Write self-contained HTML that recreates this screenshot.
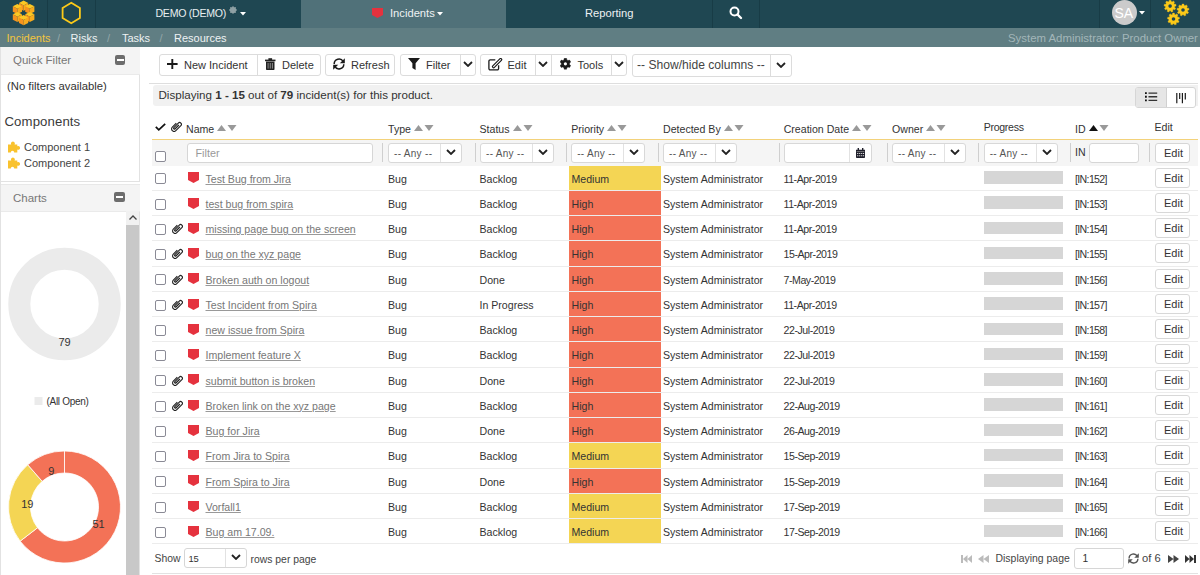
<!DOCTYPE html><html><head><meta charset="utf-8"><style>
*{box-sizing:border-box;margin:0;padding:0}
svg{display:block}
html,body{width:1200px;height:575px;overflow:hidden;background:#fff;font-family:"Liberation Sans",sans-serif;color:#333;font-size:11px}
.a{position:absolute}
.nw{white-space:nowrap}
#top{left:0;top:0;width:1200px;height:28px;background:#1f4752}
.vd{position:absolute;top:0;width:1px;height:28px;background:#183c46}
#nav{left:0;top:28px;width:1200px;height:19px;background:#607e83}
.navt{position:absolute;top:31px;font-size:11px;color:#eef2f3;line-height:14px}
.sl{color:#93a6a9}
#lp{left:0;top:47px;width:140px;height:528px;border-left:1px solid #e2e2e2;border-right:1px solid #e2e2e2}
.ph{position:absolute;left:0;width:139px;height:28px;background:#f4f4f4;border-bottom:1px solid #eaeaea}
.pht{position:absolute;left:12px;top:6px;font-size:11.5px;color:#777;line-height:14px}
.mini{position:absolute;left:113.5px;width:10.5px;height:10px;background:#6d6d6d;border-radius:2px}
.mini:after{content:"";position:absolute;left:2px;top:4px;width:7px;height:2px;background:#fff}
.btn{position:absolute;top:54px;height:22px;border:1px solid #dcdcdc;border-radius:3px;background:#fff}
.bt{position:absolute;top:4px;font-size:11px;line-height:13px;color:#333;white-space:nowrap}
.bd{position:absolute;top:0;width:1px;height:20px;background:#dcdcdc}
.hd{position:absolute;top:123px;font-size:10.6px;line-height:13px;color:#333;white-space:nowrap}
.sort{display:inline-block;margin-left:3px;vertical-align:2.5px}
.dd{position:absolute;top:142.5px;width:74px;height:20.5px;border:1px solid #d8d8d8;border-radius:3px;background:#fff}
.ddt{position:absolute;left:5px;top:4px;font-size:10px;color:#555;line-height:12px;white-space:nowrap;letter-spacing:0.3px}
.ddd{position:absolute;left:51px;top:0;width:1px;height:18.5px;background:#e2e2e2}
.ddc{position:absolute;left:57px;top:5px}
.fd{position:absolute;top:143px;width:1px;height:19px;background:#cfcfcf}
.row{position:absolute;left:152px;width:1046px;height:25.2px;border-bottom:1px solid #ececec}
.c{position:absolute;top:7px;font-size:10.6px;line-height:13px;white-space:nowrap;color:#333}
.cb{position:absolute;left:3px;top:7px;width:11px;height:11px;border:1.5px solid #8a8a95;border-radius:2px;background:#fff}
.lnk{color:#777;text-decoration:underline;text-decoration-color:#999}
.pri{position:absolute;left:417px;top:0;width:92px;height:24.2px}
.prog{position:absolute;left:831.5px;top:5.5px;width:79px;height:12.5px;background:#d6d6d6}
.eb{position:absolute;left:1002.5px;top:2px;width:35.5px;height:20px;border:1px solid #d8d8d8;border-radius:3px;background:#fff}
.ebt{position:absolute;left:8.5px;top:3px;font-size:11px;line-height:13px;color:#333}
</style></head><body>
<div id="top" class="a">
<svg class="a" style="left:0;top:0" width="47" height="28" viewBox="0 0 47 28"><path d="M23.6 0.6 L28.200000000000003 3.0 L23.6 5.3999999999999995 L19.0 3.0Z" fill="#fcc824"/><path d="M19.0 3.0 L23.6 5.3999999999999995 L23.6 10.799999999999999 L19.0 8.399999999999999Z" fill="#f7931e"/><path d="M23.6 5.3999999999999995 L28.200000000000003 3.0 L28.200000000000003 8.399999999999999 L23.6 10.799999999999999Z" fill="#f9ab1c"/><path d="M17.4 3.9 L22.0 6.3 L17.4 8.7 L12.799999999999999 6.3Z" fill="#fcc824"/><path d="M12.799999999999999 6.3 L17.4 8.7 L17.4 14.1 L12.799999999999999 11.7Z" fill="#f7931e"/><path d="M17.4 8.7 L22.0 6.3 L22.0 11.7 L17.4 14.1Z" fill="#f9ab1c"/><path d="M29.8 3.9 L34.4 6.3 L29.8 8.7 L25.200000000000003 6.3Z" fill="#fcc824"/><path d="M25.200000000000003 6.3 L29.8 8.7 L29.8 14.1 L25.200000000000003 11.7Z" fill="#f7931e"/><path d="M29.8 8.7 L34.4 6.3 L34.4 11.7 L29.8 14.1Z" fill="#f9ab1c"/><path d="M17.4 11.9 L22.0 14.3 L17.4 16.7 L12.799999999999999 14.3Z" fill="#fcc824"/><path d="M12.799999999999999 14.3 L17.4 16.7 L17.4 22.1 L12.799999999999999 19.700000000000003Z" fill="#f7931e"/><path d="M17.4 16.7 L22.0 14.3 L22.0 19.700000000000003 L17.4 22.1Z" fill="#f9ab1c"/><path d="M29.8 11.9 L34.4 14.3 L29.8 16.7 L25.200000000000003 14.3Z" fill="#fcc824"/><path d="M25.200000000000003 14.3 L29.8 16.7 L29.8 22.1 L25.200000000000003 19.700000000000003Z" fill="#f7931e"/><path d="M29.8 16.7 L34.4 14.3 L34.4 19.700000000000003 L29.8 22.1Z" fill="#f9ab1c"/><path d="M23.6 15.1 L28.200000000000003 17.5 L23.6 19.9 L19.0 17.5Z" fill="#fcc824"/><path d="M19.0 17.5 L23.6 19.9 L23.6 25.299999999999997 L19.0 22.9Z" fill="#f7931e"/><path d="M23.6 19.9 L28.200000000000003 17.5 L28.200000000000003 22.9 L23.6 25.299999999999997Z" fill="#f9ab1c"/></svg>
<div class="vd" style="left:47px"></div>
<svg class="a" style="left:60px;top:1px" width="22" height="24" viewBox="0 0 22 24"><path d="M11.25 1.8 L19.9 6.9 L19.9 17.1 L11.25 22.2 L2.6 17.1 L2.6 6.9Z" fill="none" stroke="#fcc918" stroke-width="1.8"/></svg>
<div class="vd" style="left:95px"></div>
<div class="a nw" style="left:155.5px;top:6px;font-size:10.6px;line-height:14px;color:#e8eef0;letter-spacing:-0.28px">DEMO (DEMO)</div>
<svg class="a" style="left:228.5px;top:6px" width="8" height="8" viewBox="0 0 10 10"><circle cx="5" cy="5" r="2.8" fill="none" stroke="#8fa0a4" stroke-width="2.2"/><path d="M5 0.3V9.7M0.3 5H9.7M1.7 1.7L8.3 8.3M8.3 1.7L1.7 8.3" stroke="#8fa0a4" stroke-width="1.6"/></svg>
<svg class="a" style="left:240px;top:12px" width="6" height="4" viewBox="0 0 6 4"><path d="M0 0H6L3 3.5Z" fill="#fff"/></svg>
<div class="a" style="left:301px;top:0;width:205px;height:28px;background:#507179"></div>
<svg class="a" style="left:371.5px;top:8.3px" width="11" height="10" viewBox="0 0 11 10"><path d="M0 0H11V7L5.5 10L0 7Z" fill="#e5323e"/></svg>
<div class="a nw" style="left:390px;top:6px;font-size:11.2px;line-height:14px;color:#eef2f3">Incidents</div>
<svg class="a" style="left:437px;top:12px" width="6" height="4" viewBox="0 0 6 4"><path d="M0 0H6L3 3.5Z" fill="#fff"/></svg>
<div class="a nw" style="left:585px;top:6px;font-size:11.2px;line-height:14px;color:#eef2f3">Reporting</div>
<div class="vd" style="left:712px"></div>
<svg class="a" style="left:729px;top:5.5px" width="14" height="14" viewBox="0 0 14 14"><circle cx="5.5" cy="5.5" r="4" fill="none" stroke="#fff" stroke-width="2"/><path d="M8.5 8.5L12 12" stroke="#fff" stroke-width="2.4" stroke-linecap="round"/></svg>
<div class="vd" style="left:759px"></div>
<div class="vd" style="left:1099px"></div>
<div class="a" style="left:1112px;top:0px;width:25px;height:25px;border-radius:50%;background:#cbcbcb"></div>
<div class="a nw" style="left:1114.5px;top:5px;font-size:14px;line-height:16px;color:#fff">SA</div>
<svg class="a" style="left:1139px;top:11px" width="6" height="4" viewBox="0 0 6 4"><path d="M0 0H6L3 3.5Z" fill="#fff"/></svg>
<div class="vd" style="left:1150px"></div>
<svg class="a" style="left:1162px;top:0px" width="30" height="27" viewBox="0 0 30 27"><polygon points="7.26,0.16 8.94,0.16 9.17,1.54 10.21,1.92 11.28,1.01 12.56,2.09 11.85,3.30 12.40,4.26 13.81,4.25 14.10,5.89 12.77,6.36 12.58,7.45 13.66,8.35 12.83,9.79 11.51,9.30 10.66,10.02 10.92,11.40 9.35,11.97 8.65,10.75 7.55,10.75 6.85,11.97 5.28,11.40 5.54,10.02 4.69,9.30 3.37,9.79 2.54,8.35 3.62,7.45 3.43,6.36 2.10,5.89 2.39,4.25 3.80,4.26 4.35,3.30 3.64,2.09 4.92,1.01 5.99,1.92 7.03,1.54" fill="#fcc918" stroke="#fcc918" stroke-width="0.4" stroke-linejoin="round"/><circle cx="8.1" cy="6.1" r="1.80" fill="#1f4752"/><polygon points="20.16,4.06 21.84,4.06 22.07,5.44 23.11,5.82 24.18,4.91 25.46,5.99 24.75,7.20 25.30,8.16 26.71,8.15 27.00,9.79 25.67,10.26 25.48,11.35 26.56,12.25 25.73,13.69 24.41,13.20 23.56,13.92 23.82,15.30 22.25,15.87 21.55,14.65 20.45,14.65 19.75,15.87 18.18,15.30 18.44,13.92 17.59,13.20 16.27,13.69 15.44,12.25 16.52,11.35 16.33,10.26 15.00,9.79 15.29,8.15 16.70,8.16 17.25,7.20 16.54,5.99 17.82,4.91 18.89,5.82 19.93,5.44" fill="#fcc918" stroke="#fcc918" stroke-width="0.4" stroke-linejoin="round"/><circle cx="21" cy="10" r="1.80" fill="#1f4752"/><polygon points="10.66,13.06 12.34,13.06 12.57,14.44 13.61,14.82 14.68,13.91 15.96,14.99 15.25,16.20 15.80,17.16 17.21,17.15 17.50,18.79 16.17,19.26 15.98,20.35 17.06,21.25 16.23,22.69 14.91,22.20 14.06,22.92 14.32,24.30 12.75,24.87 12.05,23.65 10.95,23.65 10.25,24.87 8.68,24.30 8.94,22.92 8.09,22.20 6.77,22.69 5.94,21.25 7.02,20.35 6.83,19.26 5.50,18.79 5.79,17.15 7.20,17.16 7.75,16.20 7.04,14.99 8.32,13.91 9.39,14.82 10.43,14.44" fill="#fcc918" stroke="#fcc918" stroke-width="0.4" stroke-linejoin="round"/><circle cx="11.5" cy="19" r="1.80" fill="#1f4752"/></svg>
</div>
<div id="nav" class="a"></div>
<div class="navt nw" style="left:6.5px;color:#f2c53d">Incidents</div>
<div class="navt sl" style="left:57px">/</div>
<div class="navt nw" style="left:70.5px">Risks</div>
<div class="navt sl" style="left:107px">/</div>
<div class="navt nw" style="left:122px">Tasks</div>
<div class="navt sl" style="left:159.5px">/</div>
<div class="navt nw" style="left:174px">Resources</div>
<div class="navt nw" style="left:1008px;color:#a3b6b9;font-size:11.4px">System Administrator: Product Owner</div>
<div id="lp" class="a">
<div class="ph" style="top:0"><div class="pht">Quick Filter</div><div class="mini" style="top:8px"></div></div>
<div class="a nw" style="left:6px;top:32px;font-size:11.3px;line-height:14px;color:#333">(No filters available)</div>
<div class="a nw" style="left:3.5px;top:66px;font-size:13.2px;line-height:17px;color:#3a3a3a;letter-spacing:0.1px">Components</div>
<div class="a" style="left:6.5px;top:94px"><svg width="13" height="12" viewBox="0 0 13 12"><path d="M0 3.5 H3.3 A1.9 1.9 0 1 1 6.5 3.5 H9.3 V5.2 A1.9 1.9 0 1 1 9.3 8.6 V11.5 H6.2 A1.7 1.7 0 0 0 2.8 11.5 H0Z" fill="#f9c22e"/></svg></div>
<div class="a nw" style="left:23px;top:93px;font-size:11px;line-height:14px;color:#444">Component 1</div>
<div class="a" style="left:6.5px;top:110px"><svg width="13" height="12" viewBox="0 0 13 12"><path d="M0 3.5 H3.3 A1.9 1.9 0 1 1 6.5 3.5 H9.3 V5.2 A1.9 1.9 0 1 1 9.3 8.6 V11.5 H6.2 A1.7 1.7 0 0 0 2.8 11.5 H0Z" fill="#f9c22e"/></svg></div>
<div class="a nw" style="left:23px;top:109px;font-size:11px;line-height:14px;color:#444">Component 2</div>
<div class="a" style="left:0;top:134px;width:139px;height:1px;background:#e2e2e2"></div>
<div class="a" style="left:0;top:135px;width:139px;height:2px;background:#fff"></div>
<div class="ph" style="top:137px;height:27.5px;border-top:1px solid #e8e8e8"><div class="pht" style="top:5.5px">Charts</div><div class="mini" style="top:7.3px;left:113px"></div></div>
<div class="a" style="left:125px;top:164px;width:13px;height:364px;background:#f1f1f1"></div>
<div class="a" style="left:125px;top:178.4px;width:13px;height:350px;background:#c8c8c8"></div>
<svg class="a" style="left:127px;top:167px" width="10" height="7" viewBox="0 0 10 7"><path d="M1.5 5.5 L5 2 L8.5 5.5" fill="none" stroke="#444" stroke-width="1.3"/></svg>
<svg class="a" style="left:0;top:164px" width="125" height="364" viewBox="0 0 125 364">
<circle cx="63.5" cy="93" r="45.2" fill="none" stroke="#ebebeb" stroke-width="22"/>
<text x="63.5" y="135" font-family="Liberation Sans" font-size="11" fill="#333" text-anchor="middle">79</text>
<rect x="33.5" y="186" width="8" height="8" fill="#ebebeb"/>
<text x="45.5" y="193.5" font-family="Liberation Sans" font-size="10" fill="#333" letter-spacing="-0.3">(All Open)</text>
<path d="M63.50 240.00 A56 56 0 1 1 19.13 330.16 L36.56 316.74 A34 34 0 1 0 63.50 262.00Z" fill="#f37257" stroke="#fff" stroke-width="0.8"/>
<path d="M19.13 330.16 A56 56 0 0 1 26.75 253.74 L41.19 270.34 A34 34 0 0 0 36.56 316.74Z" fill="#f4d554" stroke="#fff" stroke-width="0.8"/>
<path d="M26.75 253.74 A56 56 0 0 1 63.49 240.00 L63.50 262.00 A34 34 0 0 0 41.19 270.34Z" fill="#f37257" stroke="#fff" stroke-width="0.8"/>
<text x="50.3" y="264.3" font-family="Liberation Sans" font-size="11" fill="#333" text-anchor="middle">9</text>
<text x="26.3" y="296.7" font-family="Liberation Sans" font-size="11" fill="#333" text-anchor="middle">19</text>
<text x="97.6" y="317" font-family="Liberation Sans" font-size="11" fill="#333" text-anchor="middle">51</text>
</svg>
</div>
<div class="btn" style="left:159px;width:162px"><svg class="a" style="left:6.5px;top:4px" width="11" height="10" viewBox="0 0 11 10"><path d="M5.3 0V10M0 5H10.6" stroke="#1a1a1a" stroke-width="1.9"/></svg><div class="bt" style="left:24px">New Incident</div><div class="bd" style="left:97px"></div><svg class="a" style="left:105px;top:2.8px" width="10.5" height="12" viewBox="0 0 10.5 12"><path d="M3.4 0.2H7.1V2H3.4Z" fill="#222"/><path d="M0 1.6H10.5V3.2H0Z" fill="#222"/><path d="M1 3.6H9.5V11.3Q9.5 12 8.8 12H1.7Q1 12 1 11.3Z" fill="#222"/><path d="M3.1 5V10.6M5.25 5V10.6M7.4 5V10.6" stroke="#9a9a9a" stroke-width="0.9"/></svg><div class="bt" style="left:122px">Delete</div></div>
<div class="btn" style="left:325px;width:70px"><svg class="a" style="left:7px;top:2.8px" width="12" height="12" viewBox="0 0 12 12"><path d="M1.2 6A4.8 4.8 0 0 1 10.2 3.6" fill="none" stroke="#1a1a1a" stroke-width="1.5"/><path d="M11.8 0.2V5.2H6.8Z" fill="#1a1a1a"/><path d="M10.8 6.2A4.8 4.8 0 0 1 1.8 8.4" fill="none" stroke="#1a1a1a" stroke-width="1.5"/><path d="M0.2 11.8V6.8H5.2Z" fill="#1a1a1a"/></svg><div class="bt" style="left:25px">Refresh</div></div>
<div class="btn" style="left:399.5px;width:76px"><svg class="a" style="left:7.6px;top:2.8px" width="12" height="12" viewBox="0 0 12 12"><path d="M0 0H12L7.6 5.2V11.9L4.4 10V5.2Z" fill="#1a1a1a"/></svg><div class="bt" style="left:25.5px">Filter</div><div class="bd" style="left:59px"></div><div class="a" style="left:62px;top:6px"><svg width="10" height="6" viewBox="0 0 10 6"><path d="M1 1 L5 5 L9 1" fill="none" stroke="#222" stroke-width="1.8"/></svg></div></div>
<div class="btn" style="left:480px;width:147px"><svg class="a" style="left:6.5px;top:2.5px" width="15" height="13" viewBox="0 0 15 13"><path d="M7.3 1.8H2.2A1.3 1.3 0 0 0 0.9 3.1V10.6A1.3 1.3 0 0 0 2.2 11.9H9.3A1.3 1.3 0 0 0 10.6 10.6V7.2" fill="none" stroke="#1a1a1a" stroke-width="1.3"/><path d="M5.6 8.6L12.6 1.6" stroke="#1a1a1a" stroke-width="3.4" stroke-linecap="round"/><path d="M5.6 8.6L12.6 1.6" stroke="#fff" stroke-width="1.1" stroke-linecap="round"/></svg><div class="bt" style="left:26.5px">Edit</div><div class="bd" style="left:53.5px"></div><div class="a" style="left:57px;top:6px"><svg width="10" height="6" viewBox="0 0 10 6"><path d="M1 1 L5 5 L9 1" fill="none" stroke="#222" stroke-width="1.8"/></svg></div><div class="bd" style="left:70px"></div><svg class="a" style="left:78.5px;top:3.2px" width="11" height="12" viewBox="0 0 11 12"><polygon points="4.24,0.32 6.56,0.32 6.93,1.95 7.97,2.55 9.56,2.05 10.73,4.07 9.50,5.19 9.50,6.41 10.73,7.53 9.56,9.55 7.97,9.05 6.93,9.65 6.56,11.28 4.24,11.28 3.87,9.65 2.83,9.05 1.24,9.55 0.07,7.53 1.30,6.41 1.30,5.19 0.07,4.07 1.24,2.05 2.83,2.55 3.87,1.95" fill="#1a1a1a" stroke="#1a1a1a" stroke-width="0.4" stroke-linejoin="round"/><circle cx="5.4" cy="5.8" r="1.60" fill="#fff"/></svg><div class="bt" style="left:96.5px">Tools</div><div class="bd" style="left:130px"></div><div class="a" style="left:133px;top:6px"><svg width="10" height="6" viewBox="0 0 10 6"><path d="M1 1 L5 5 L9 1" fill="none" stroke="#222" stroke-width="1.8"/></svg></div></div>
<div class="btn" style="left:631.5px;width:160px;height:22.5px"><div class="bt" style="left:4.5px;font-size:12.1px;top:3.5px;color:#444">-- Show/hide columns --</div><div class="bd" style="left:137.5px;height:20.5px"></div><div class="a" style="left:143px;top:7px"><svg width="10" height="6" viewBox="0 0 10 6"><path d="M1 1 L5 5 L9 1" fill="none" stroke="#222" stroke-width="1.8"/></svg></div></div>
<div class="a" style="left:149px;top:82.5px;width:1049px;height:1px;background:#dedede"></div>
<div class="a" style="left:152.5px;top:85px;width:1045.5px;height:20.5px;background:#f1f1f1;border-radius:3px 0 0 3px"></div>
<div class="a nw" style="left:158.5px;top:88px;font-size:11.6px;line-height:13px;color:#333">Displaying <b>1 - 15</b> out of <b>79</b> incident(s) for this product.</div>
<div class="a" style="left:1135px;top:87px;width:61px;height:21px;border:1px solid #d6d6d6;border-radius:3px;background:#fff;overflow:hidden"><div class="a" style="left:0;top:0;width:31px;height:19px;background:#e6e6e6;border-right:1px solid #d0d0d0"></div><svg class="a" style="left:9px;top:4.2px" width="13" height="10" viewBox="0 0 13 10"><path d="M0 0.2H1.8V2H0ZM0 3.85H1.8V5.65H0ZM0 7.5H1.8V9.3H0Z" fill="#111"/><path d="M3.5 1.1H12.2M3.5 4.75H12.2M3.5 8.4H12.2" stroke="#333" stroke-width="1.4"/></svg><svg class="a" style="left:40px;top:4.5px" width="11" height="11" viewBox="0 0 11 11"><path d="M0.8 0V10.2M3.7 0V6M6.4 0V10.2M9.3 0V6.5" stroke="#1a1a1a" stroke-width="1.2"/></svg></div>
<svg class="a" style="left:155px;top:123px" width="11" height="8" viewBox="0 0 11 8"><path d="M0.8 3.8L3.8 6.8L10.2 0.8" fill="none" stroke="#111" stroke-width="1.75"/></svg>
<div class="a" style="left:171px;top:121px"><svg width="11" height="11" viewBox="0 0 11 11"><g transform="translate(5.5 5.5) rotate(45) scale(0.92) translate(-2.9 -6.6)"><path d="M3.6 3.6V9.4A0.95 0.95 0 0 1 1.7 9.4V2.6A1.95 1.95 0 0 1 5.6 2.6V10.3A2.7 2.7 0 0 1 0.2 10.3V4.2" fill="none" stroke="#222" stroke-width="1.25"/></g></svg></div>
<div class="hd" style="left:186px">Name<span class="sort"><svg width="20" height="6" viewBox="0 0 20 6"><path d="M0 6 L4.5 0 L9 6Z" fill="#999"/><path d="M10.5 0 L19.5 0 L15 6Z" fill="#999"/></svg></span></div>
<div class="hd" style="left:388px">Type<span class="sort"><svg width="20" height="6" viewBox="0 0 20 6"><path d="M0 6 L4.5 0 L9 6Z" fill="#999"/><path d="M10.5 0 L19.5 0 L15 6Z" fill="#999"/></svg></span></div>
<div class="hd" style="left:479.5px">Status<span class="sort"><svg width="20" height="6" viewBox="0 0 20 6"><path d="M0 6 L4.5 0 L9 6Z" fill="#999"/><path d="M10.5 0 L19.5 0 L15 6Z" fill="#999"/></svg></span></div>
<div class="hd" style="left:571.2px">Priority<span class="sort"><svg width="20" height="6" viewBox="0 0 20 6"><path d="M0 6 L4.5 0 L9 6Z" fill="#999"/><path d="M10.5 0 L19.5 0 L15 6Z" fill="#999"/></svg></span></div>
<div class="hd" style="left:663px">Detected By<span class="sort"><svg width="20" height="6" viewBox="0 0 20 6"><path d="M0 6 L4.5 0 L9 6Z" fill="#999"/><path d="M10.5 0 L19.5 0 L15 6Z" fill="#999"/></svg></span></div>
<div class="hd" style="left:783.7px">Creation Date<span class="sort"><svg width="20" height="6" viewBox="0 0 20 6"><path d="M0 6 L4.5 0 L9 6Z" fill="#999"/><path d="M10.5 0 L19.5 0 L15 6Z" fill="#999"/></svg></span></div>
<div class="hd" style="left:892px">Owner<span class="sort"><svg width="20" height="6" viewBox="0 0 20 6"><path d="M0 6 L4.5 0 L9 6Z" fill="#999"/><path d="M10.5 0 L19.5 0 L15 6Z" fill="#999"/></svg></span></div>
<div class="hd" style="left:983.7px;top:120.5px;letter-spacing:-0.3px">Progress</div>
<div class="hd" style="left:1075px">ID<span class="sort"><svg width="20" height="6" viewBox="0 0 20 6"><path d="M0 6 L4.5 0 L9 6Z" fill="#111"/><path d="M10.5 0 L19.5 0 L15 6Z" fill="#999"/></svg></span></div>
<div class="hd" style="left:1154.5px;top:120.5px">Edit</div>
<div class="a" style="left:152px;top:139px;width:1046px;height:1.2px;background:#f3d27a"></div>
<div class="a" style="left:152px;top:140.2px;width:1046px;height:25.5px;background:#f5f5f5"></div>
<div class="cb" style="left:155px;top:150.5px"></div>
<div class="a" style="left:186.5px;top:143.3px;width:186px;height:19.5px;border:1px solid #d6d6d6;border-radius:3px;background:#fff"><div class="a nw" style="left:8px;top:3px;font-size:10.8px;line-height:13px;color:#999">Filter</div></div>
<div class="fd" style="left:382px"></div>
<div class="fd" style="left:474.5px"></div>
<div class="fd" style="left:566.2px"></div>
<div class="fd" style="left:658px"></div>
<div class="fd" style="left:778.7px"></div>
<div class="fd" style="left:887px"></div>
<div class="fd" style="left:978.2px"></div>
<div class="fd" style="left:1070px"></div>
<div class="fd" style="left:1149.2px"></div>
<div class="dd" style="left:388px"><div class="ddt">-- Any --</div><div class="ddd"></div><div class="ddc"><svg width="10" height="6" viewBox="0 0 10 6"><path d="M1 1 L5 5 L9 1" fill="none" stroke="#222" stroke-width="1.8"/></svg></div></div>
<div class="dd" style="left:480px"><div class="ddt">-- Any --</div><div class="ddd"></div><div class="ddc"><svg width="10" height="6" viewBox="0 0 10 6"><path d="M1 1 L5 5 L9 1" fill="none" stroke="#222" stroke-width="1.8"/></svg></div></div>
<div class="dd" style="left:571.2px"><div class="ddt">-- Any --</div><div class="ddd"></div><div class="ddc"><svg width="10" height="6" viewBox="0 0 10 6"><path d="M1 1 L5 5 L9 1" fill="none" stroke="#222" stroke-width="1.8"/></svg></div></div>
<div class="dd" style="left:663px"><div class="ddt">-- Any --</div><div class="ddd"></div><div class="ddc"><svg width="10" height="6" viewBox="0 0 10 6"><path d="M1 1 L5 5 L9 1" fill="none" stroke="#222" stroke-width="1.8"/></svg></div></div>
<div class="dd" style="left:892px"><div class="ddt">-- Any --</div><div class="ddd"></div><div class="ddc"><svg width="10" height="6" viewBox="0 0 10 6"><path d="M1 1 L5 5 L9 1" fill="none" stroke="#222" stroke-width="1.8"/></svg></div></div>
<div class="dd" style="left:983.7px"><div class="ddt">-- Any --</div><div class="ddd"></div><div class="ddc"><svg width="10" height="6" viewBox="0 0 10 6"><path d="M1 1 L5 5 L9 1" fill="none" stroke="#222" stroke-width="1.8"/></svg></div></div>
<div class="dd" style="left:783.7px;width:88px"><div class="ddd" style="left:64.5px"></div><svg class="a" style="left:71.8px;top:4.5px" width="9" height="10" viewBox="0 0 9 10"><path d="M0 1.8H9V9.2Q9 10 8.2 10H0.8Q0 10 0 9.2Z" fill="#1e1e2a"/><path d="M2.3 0V2.2M6.7 0V2.2" stroke="#1e1e2a" stroke-width="1.4"/><path d="M0.6 3.6H8.4" stroke="#999" stroke-width="0.7"/><path d="M1.1 4.9h1.2v1.1h-1.2zM3.1 4.9h1.2v1.1h-1.2zM5.1 4.9h1.2v1.1h-1.2zM7.0 4.9h1.1v1.1h-1.1zM1.1 7.2h1.2v1.1h-1.2zM3.1 7.2h1.2v1.1h-1.2zM5.1 7.2h1.2v1.1h-1.2zM7.0 7.2h1.1v1.1h-1.1z" fill="#ddd"/></svg></div>
<div class="a nw" style="left:1075px;top:146px;font-size:10.6px;line-height:12px;color:#333">IN</div>
<div class="a" style="left:1088.7px;top:143.2px;width:50.5px;height:19.5px;border:1px solid #d6d6d6;border-radius:3px;background:#fff"></div>
<div class="a" style="left:1154.5px;top:143.2px;width:35.5px;height:19.5px;border:1px solid #d6d6d6;border-radius:3px;background:#fff"><div class="ebt" style="top:3px">Edit</div></div>
<div class="row" style="top:165.60px"><div class="cb" style="top:7.8px"></div><div class="a" style="left:35.7px;top:6.8px"><svg width="11" height="11" viewBox="0 0 11 11"><path d="M0 0 H11 V8 L5.5 11 L0 8 Z" fill="#e5323e"/></svg></div><div class="c lnk" style="left:53.5px">Test Bug from Jira</div><div class="c" style="left:236px">Bug</div><div class="c" style="left:327.5px">Backlog</div><div class="pri" style="background:#f4d554"></div><div class="c" style="left:419.5px">Medium</div><div class="c" style="left:511px">System Administrator</div><div class="c" style="left:631.5px;letter-spacing:-0.45px">11-Apr-2019</div><div class="prog"></div><div class="c" style="left:923px;letter-spacing:-0.65px">[IN:152]</div><div class="eb"><div class="ebt">Edit</div></div></div>
<div class="row" style="top:190.85px"><div class="cb" style="top:7.8px"></div><div class="a" style="left:35.7px;top:6.8px"><svg width="11" height="11" viewBox="0 0 11 11"><path d="M0 0 H11 V8 L5.5 11 L0 8 Z" fill="#e5323e"/></svg></div><div class="c lnk" style="left:53.5px">test bug from spira</div><div class="c" style="left:236px">Bug</div><div class="c" style="left:327.5px">Backlog</div><div class="pri" style="background:#f37257"></div><div class="c" style="left:419.5px">High</div><div class="c" style="left:511px">System Administrator</div><div class="c" style="left:631.5px;letter-spacing:-0.45px">11-Apr-2019</div><div class="prog"></div><div class="c" style="left:923px;letter-spacing:-0.65px">[IN:153]</div><div class="eb"><div class="ebt">Edit</div></div></div>
<div class="row" style="top:216.10px"><div class="cb" style="top:7.8px"></div><div class="a" style="left:19.5px;top:7px"><svg width="11" height="11" viewBox="0 0 11 11"><g transform="translate(5.5 5.5) rotate(45) scale(0.92) translate(-2.9 -6.6)"><path d="M3.6 3.6V9.4A0.95 0.95 0 0 1 1.7 9.4V2.6A1.95 1.95 0 0 1 5.6 2.6V10.3A2.7 2.7 0 0 1 0.2 10.3V4.2" fill="none" stroke="#222" stroke-width="1.25"/></g></svg></div><div class="a" style="left:35.7px;top:6.8px"><svg width="11" height="11" viewBox="0 0 11 11"><path d="M0 0 H11 V8 L5.5 11 L0 8 Z" fill="#e5323e"/></svg></div><div class="c lnk" style="left:53.5px">missing page bug on the screen</div><div class="c" style="left:236px">Bug</div><div class="c" style="left:327.5px">Backlog</div><div class="pri" style="background:#f37257"></div><div class="c" style="left:419.5px">High</div><div class="c" style="left:511px">System Administrator</div><div class="c" style="left:631.5px;letter-spacing:-0.45px">11-Apr-2019</div><div class="prog"></div><div class="c" style="left:923px;letter-spacing:-0.65px">[IN:154]</div><div class="eb"><div class="ebt">Edit</div></div></div>
<div class="row" style="top:241.35px"><div class="cb" style="top:7.8px"></div><div class="a" style="left:19.5px;top:7px"><svg width="11" height="11" viewBox="0 0 11 11"><g transform="translate(5.5 5.5) rotate(45) scale(0.92) translate(-2.9 -6.6)"><path d="M3.6 3.6V9.4A0.95 0.95 0 0 1 1.7 9.4V2.6A1.95 1.95 0 0 1 5.6 2.6V10.3A2.7 2.7 0 0 1 0.2 10.3V4.2" fill="none" stroke="#222" stroke-width="1.25"/></g></svg></div><div class="a" style="left:35.7px;top:6.8px"><svg width="11" height="11" viewBox="0 0 11 11"><path d="M0 0 H11 V8 L5.5 11 L0 8 Z" fill="#e5323e"/></svg></div><div class="c lnk" style="left:53.5px">bug on the xyz page</div><div class="c" style="left:236px">Bug</div><div class="c" style="left:327.5px">Backlog</div><div class="pri" style="background:#f37257"></div><div class="c" style="left:419.5px">High</div><div class="c" style="left:511px">System Administrator</div><div class="c" style="left:631.5px;letter-spacing:-0.45px">15-Apr-2019</div><div class="prog"></div><div class="c" style="left:923px;letter-spacing:-0.65px">[IN:155]</div><div class="eb"><div class="ebt">Edit</div></div></div>
<div class="row" style="top:266.60px"><div class="cb" style="top:7.8px"></div><div class="a" style="left:19.5px;top:7px"><svg width="11" height="11" viewBox="0 0 11 11"><g transform="translate(5.5 5.5) rotate(45) scale(0.92) translate(-2.9 -6.6)"><path d="M3.6 3.6V9.4A0.95 0.95 0 0 1 1.7 9.4V2.6A1.95 1.95 0 0 1 5.6 2.6V10.3A2.7 2.7 0 0 1 0.2 10.3V4.2" fill="none" stroke="#222" stroke-width="1.25"/></g></svg></div><div class="a" style="left:35.7px;top:6.8px"><svg width="11" height="11" viewBox="0 0 11 11"><path d="M0 0 H11 V8 L5.5 11 L0 8 Z" fill="#e5323e"/></svg></div><div class="c lnk" style="left:53.5px">Broken auth on logout</div><div class="c" style="left:236px">Bug</div><div class="c" style="left:327.5px">Done</div><div class="pri" style="background:#f37257"></div><div class="c" style="left:419.5px">High</div><div class="c" style="left:511px">System Administrator</div><div class="c" style="left:631.5px;letter-spacing:-0.45px">7-May-2019</div><div class="prog"></div><div class="c" style="left:923px;letter-spacing:-0.65px">[IN:156]</div><div class="eb"><div class="ebt">Edit</div></div></div>
<div class="row" style="top:291.85px"><div class="cb" style="top:7.8px"></div><div class="a" style="left:19.5px;top:7px"><svg width="11" height="11" viewBox="0 0 11 11"><g transform="translate(5.5 5.5) rotate(45) scale(0.92) translate(-2.9 -6.6)"><path d="M3.6 3.6V9.4A0.95 0.95 0 0 1 1.7 9.4V2.6A1.95 1.95 0 0 1 5.6 2.6V10.3A2.7 2.7 0 0 1 0.2 10.3V4.2" fill="none" stroke="#222" stroke-width="1.25"/></g></svg></div><div class="a" style="left:35.7px;top:6.8px"><svg width="11" height="11" viewBox="0 0 11 11"><path d="M0 0 H11 V8 L5.5 11 L0 8 Z" fill="#e5323e"/></svg></div><div class="c lnk" style="left:53.5px">Test Incident from Spira</div><div class="c" style="left:236px">Bug</div><div class="c" style="left:327.5px">In Progress</div><div class="pri" style="background:#f37257"></div><div class="c" style="left:419.5px">High</div><div class="c" style="left:511px">System Administrator</div><div class="c" style="left:631.5px;letter-spacing:-0.45px">11-Apr-2019</div><div class="prog"></div><div class="c" style="left:923px;letter-spacing:-0.65px">[IN:157]</div><div class="eb"><div class="ebt">Edit</div></div></div>
<div class="row" style="top:317.10px"><div class="cb" style="top:7.8px"></div><div class="a" style="left:35.7px;top:6.8px"><svg width="11" height="11" viewBox="0 0 11 11"><path d="M0 0 H11 V8 L5.5 11 L0 8 Z" fill="#e5323e"/></svg></div><div class="c lnk" style="left:53.5px">new issue from Spira</div><div class="c" style="left:236px">Bug</div><div class="c" style="left:327.5px">Backlog</div><div class="pri" style="background:#f37257"></div><div class="c" style="left:419.5px">High</div><div class="c" style="left:511px">System Administrator</div><div class="c" style="left:631.5px;letter-spacing:-0.45px">22-Jul-2019</div><div class="prog"></div><div class="c" style="left:923px;letter-spacing:-0.65px">[IN:158]</div><div class="eb"><div class="ebt">Edit</div></div></div>
<div class="row" style="top:342.35px"><div class="cb" style="top:7.8px"></div><div class="a" style="left:35.7px;top:6.8px"><svg width="11" height="11" viewBox="0 0 11 11"><path d="M0 0 H11 V8 L5.5 11 L0 8 Z" fill="#e5323e"/></svg></div><div class="c lnk" style="left:53.5px">Implement feature X</div><div class="c" style="left:236px">Bug</div><div class="c" style="left:327.5px">Backlog</div><div class="pri" style="background:#f37257"></div><div class="c" style="left:419.5px">High</div><div class="c" style="left:511px">System Administrator</div><div class="c" style="left:631.5px;letter-spacing:-0.45px">22-Jul-2019</div><div class="prog"></div><div class="c" style="left:923px;letter-spacing:-0.65px">[IN:159]</div><div class="eb"><div class="ebt">Edit</div></div></div>
<div class="row" style="top:367.60px"><div class="cb" style="top:7.8px"></div><div class="a" style="left:19.5px;top:7px"><svg width="11" height="11" viewBox="0 0 11 11"><g transform="translate(5.5 5.5) rotate(45) scale(0.92) translate(-2.9 -6.6)"><path d="M3.6 3.6V9.4A0.95 0.95 0 0 1 1.7 9.4V2.6A1.95 1.95 0 0 1 5.6 2.6V10.3A2.7 2.7 0 0 1 0.2 10.3V4.2" fill="none" stroke="#222" stroke-width="1.25"/></g></svg></div><div class="a" style="left:35.7px;top:6.8px"><svg width="11" height="11" viewBox="0 0 11 11"><path d="M0 0 H11 V8 L5.5 11 L0 8 Z" fill="#e5323e"/></svg></div><div class="c lnk" style="left:53.5px">submit button is broken</div><div class="c" style="left:236px">Bug</div><div class="c" style="left:327.5px">Done</div><div class="pri" style="background:#f37257"></div><div class="c" style="left:419.5px">High</div><div class="c" style="left:511px">System Administrator</div><div class="c" style="left:631.5px;letter-spacing:-0.45px">22-Jul-2019</div><div class="prog"></div><div class="c" style="left:923px;letter-spacing:-0.65px">[IN:160]</div><div class="eb"><div class="ebt">Edit</div></div></div>
<div class="row" style="top:392.85px"><div class="cb" style="top:7.8px"></div><div class="a" style="left:19.5px;top:7px"><svg width="11" height="11" viewBox="0 0 11 11"><g transform="translate(5.5 5.5) rotate(45) scale(0.92) translate(-2.9 -6.6)"><path d="M3.6 3.6V9.4A0.95 0.95 0 0 1 1.7 9.4V2.6A1.95 1.95 0 0 1 5.6 2.6V10.3A2.7 2.7 0 0 1 0.2 10.3V4.2" fill="none" stroke="#222" stroke-width="1.25"/></g></svg></div><div class="a" style="left:35.7px;top:6.8px"><svg width="11" height="11" viewBox="0 0 11 11"><path d="M0 0 H11 V8 L5.5 11 L0 8 Z" fill="#e5323e"/></svg></div><div class="c lnk" style="left:53.5px">Broken link on the xyz page</div><div class="c" style="left:236px">Bug</div><div class="c" style="left:327.5px">Backlog</div><div class="pri" style="background:#f37257"></div><div class="c" style="left:419.5px">High</div><div class="c" style="left:511px">System Administrator</div><div class="c" style="left:631.5px;letter-spacing:-0.45px">22-Aug-2019</div><div class="prog"></div><div class="c" style="left:923px;letter-spacing:-0.65px">[IN:161]</div><div class="eb"><div class="ebt">Edit</div></div></div>
<div class="row" style="top:418.10px"><div class="cb" style="top:7.8px"></div><div class="a" style="left:35.7px;top:6.8px"><svg width="11" height="11" viewBox="0 0 11 11"><path d="M0 0 H11 V8 L5.5 11 L0 8 Z" fill="#e5323e"/></svg></div><div class="c lnk" style="left:53.5px">Bug for Jira</div><div class="c" style="left:236px">Bug</div><div class="c" style="left:327.5px">Done</div><div class="pri" style="background:#f37257"></div><div class="c" style="left:419.5px">High</div><div class="c" style="left:511px">System Administrator</div><div class="c" style="left:631.5px;letter-spacing:-0.45px">26-Aug-2019</div><div class="prog"></div><div class="c" style="left:923px;letter-spacing:-0.65px">[IN:162]</div><div class="eb"><div class="ebt">Edit</div></div></div>
<div class="row" style="top:443.35px"><div class="cb" style="top:7.8px"></div><div class="a" style="left:35.7px;top:6.8px"><svg width="11" height="11" viewBox="0 0 11 11"><path d="M0 0 H11 V8 L5.5 11 L0 8 Z" fill="#e5323e"/></svg></div><div class="c lnk" style="left:53.5px">From Jira to Spira</div><div class="c" style="left:236px">Bug</div><div class="c" style="left:327.5px">Backlog</div><div class="pri" style="background:#f4d554"></div><div class="c" style="left:419.5px">Medium</div><div class="c" style="left:511px">System Administrator</div><div class="c" style="left:631.5px;letter-spacing:-0.45px">15-Sep-2019</div><div class="prog"></div><div class="c" style="left:923px;letter-spacing:-0.65px">[IN:163]</div><div class="eb"><div class="ebt">Edit</div></div></div>
<div class="row" style="top:468.60px"><div class="cb" style="top:7.8px"></div><div class="a" style="left:35.7px;top:6.8px"><svg width="11" height="11" viewBox="0 0 11 11"><path d="M0 0 H11 V8 L5.5 11 L0 8 Z" fill="#e5323e"/></svg></div><div class="c lnk" style="left:53.5px">From Spira to Jira</div><div class="c" style="left:236px">Bug</div><div class="c" style="left:327.5px">Done</div><div class="pri" style="background:#f37257"></div><div class="c" style="left:419.5px">High</div><div class="c" style="left:511px">System Administrator</div><div class="c" style="left:631.5px;letter-spacing:-0.45px">15-Sep-2019</div><div class="prog"></div><div class="c" style="left:923px;letter-spacing:-0.65px">[IN:164]</div><div class="eb"><div class="ebt">Edit</div></div></div>
<div class="row" style="top:493.85px"><div class="cb" style="top:7.8px"></div><div class="a" style="left:35.7px;top:6.8px"><svg width="11" height="11" viewBox="0 0 11 11"><path d="M0 0 H11 V8 L5.5 11 L0 8 Z" fill="#e5323e"/></svg></div><div class="c lnk" style="left:53.5px">Vorfall1</div><div class="c" style="left:236px">Bug</div><div class="c" style="left:327.5px">Backlog</div><div class="pri" style="background:#f4d554"></div><div class="c" style="left:419.5px">Medium</div><div class="c" style="left:511px">System Administrator</div><div class="c" style="left:631.5px;letter-spacing:-0.45px">17-Sep-2019</div><div class="prog"></div><div class="c" style="left:923px;letter-spacing:-0.65px">[IN:165]</div><div class="eb"><div class="ebt">Edit</div></div></div>
<div class="row" style="top:519.10px"><div class="cb" style="top:7.8px"></div><div class="a" style="left:35.7px;top:6.8px"><svg width="11" height="11" viewBox="0 0 11 11"><path d="M0 0 H11 V8 L5.5 11 L0 8 Z" fill="#e5323e"/></svg></div><div class="c lnk" style="left:53.5px">Bug am 17.09.</div><div class="c" style="left:236px">Bug</div><div class="c" style="left:327.5px">Backlog</div><div class="pri" style="background:#f4d554"></div><div class="c" style="left:419.5px">Medium</div><div class="c" style="left:511px">System Administrator</div><div class="c" style="left:631.5px;letter-spacing:-0.45px">17-Sep-2019</div><div class="prog"></div><div class="c" style="left:923px;letter-spacing:-0.65px">[IN:166]</div><div class="eb"><div class="ebt">Edit</div></div></div>
<div class="a nw" style="left:154.5px;top:552px;font-size:10.4px;line-height:13px;color:#444">Show</div>
<div class="a" style="left:183.5px;top:547.7px;width:63px;height:20px;border:1px solid #d6d6d6;border-radius:3px;background:#fff"><div class="a nw" style="left:4px;top:4.5px;font-size:9.4px;line-height:12px;color:#333;letter-spacing:-0.3px">15</div><div class="a" style="left:40px;top:0;width:1px;height:18px;background:#e2e2e2"></div><div class="a" style="left:46px;top:5px"><svg width="10" height="6" viewBox="0 0 10 6"><path d="M1 1 L5 5 L9 1" fill="none" stroke="#222" stroke-width="1.8"/></svg></div></div>
<div class="a nw" style="left:250.5px;top:552.5px;font-size:10.4px;line-height:13px;color:#444">rows per page</div>
<div class="a" style="left:152px;top:572.8px;width:1046px;height:1px;background:#e2e2e2"></div>
<div class="a" style="left:960.5px;top:555px"><svg width="11" height="8" viewBox="0 0 11 8"><path d="M0 0H2V8H0Z M2 4L6.5 0V8Z M6.5 4L11 0V8Z" fill="#bbb"/></svg></div>
<div class="a" style="left:978px;top:555px"><svg width="11" height="8" viewBox="0 0 11 8"><path d="M0 4L5.5 0V8Z M5.5 4L11 0V8Z" fill="#bbb"/></svg></div>
<div class="a nw" style="left:995.5px;top:552px;font-size:10.45px;line-height:13px;color:#444">Displaying page</div>
<div class="a" style="left:1073.5px;top:547.8px;width:50px;height:21.4px;border:1px solid #d6d6d6;border-radius:3px;background:#fff"><div class="a nw" style="left:8px;top:4.5px;font-size:10.2px;line-height:12px;color:#333">1</div></div>
<svg class="a" style="left:1127.5px;top:552.5px" width="11" height="11" viewBox="0 0 12 12"><path d="M1.2 6A4.8 4.8 0 0 1 10.2 3.6" fill="none" stroke="#555" stroke-width="1.5"/><path d="M11.8 0.2V5.2H6.8Z" fill="#555"/><path d="M10.8 6.2A4.8 4.8 0 0 1 1.8 8.4" fill="none" stroke="#555" stroke-width="1.5"/><path d="M0.2 11.8V6.8H5.2Z" fill="#555"/></svg>
<div class="a nw" style="left:1142px;top:552px;font-size:11.2px;line-height:13px;color:#444">of 6</div>
<div class="a" style="left:1167.5px;top:555px"><svg width="11" height="8" viewBox="0 0 11 8"><path d="M0 0L5.5 4L0 8Z M5.5 0L11 4L5.5 8Z" fill="#444"/></svg></div>
<div class="a" style="left:1185px;top:555px"><svg width="11" height="8" viewBox="0 0 11 8"><path d="M0 0L4.5 4L0 8Z M4.5 0L9 4L4.5 8Z M9 0H11V8H9Z" fill="#333"/></svg></div>
</body></html>
